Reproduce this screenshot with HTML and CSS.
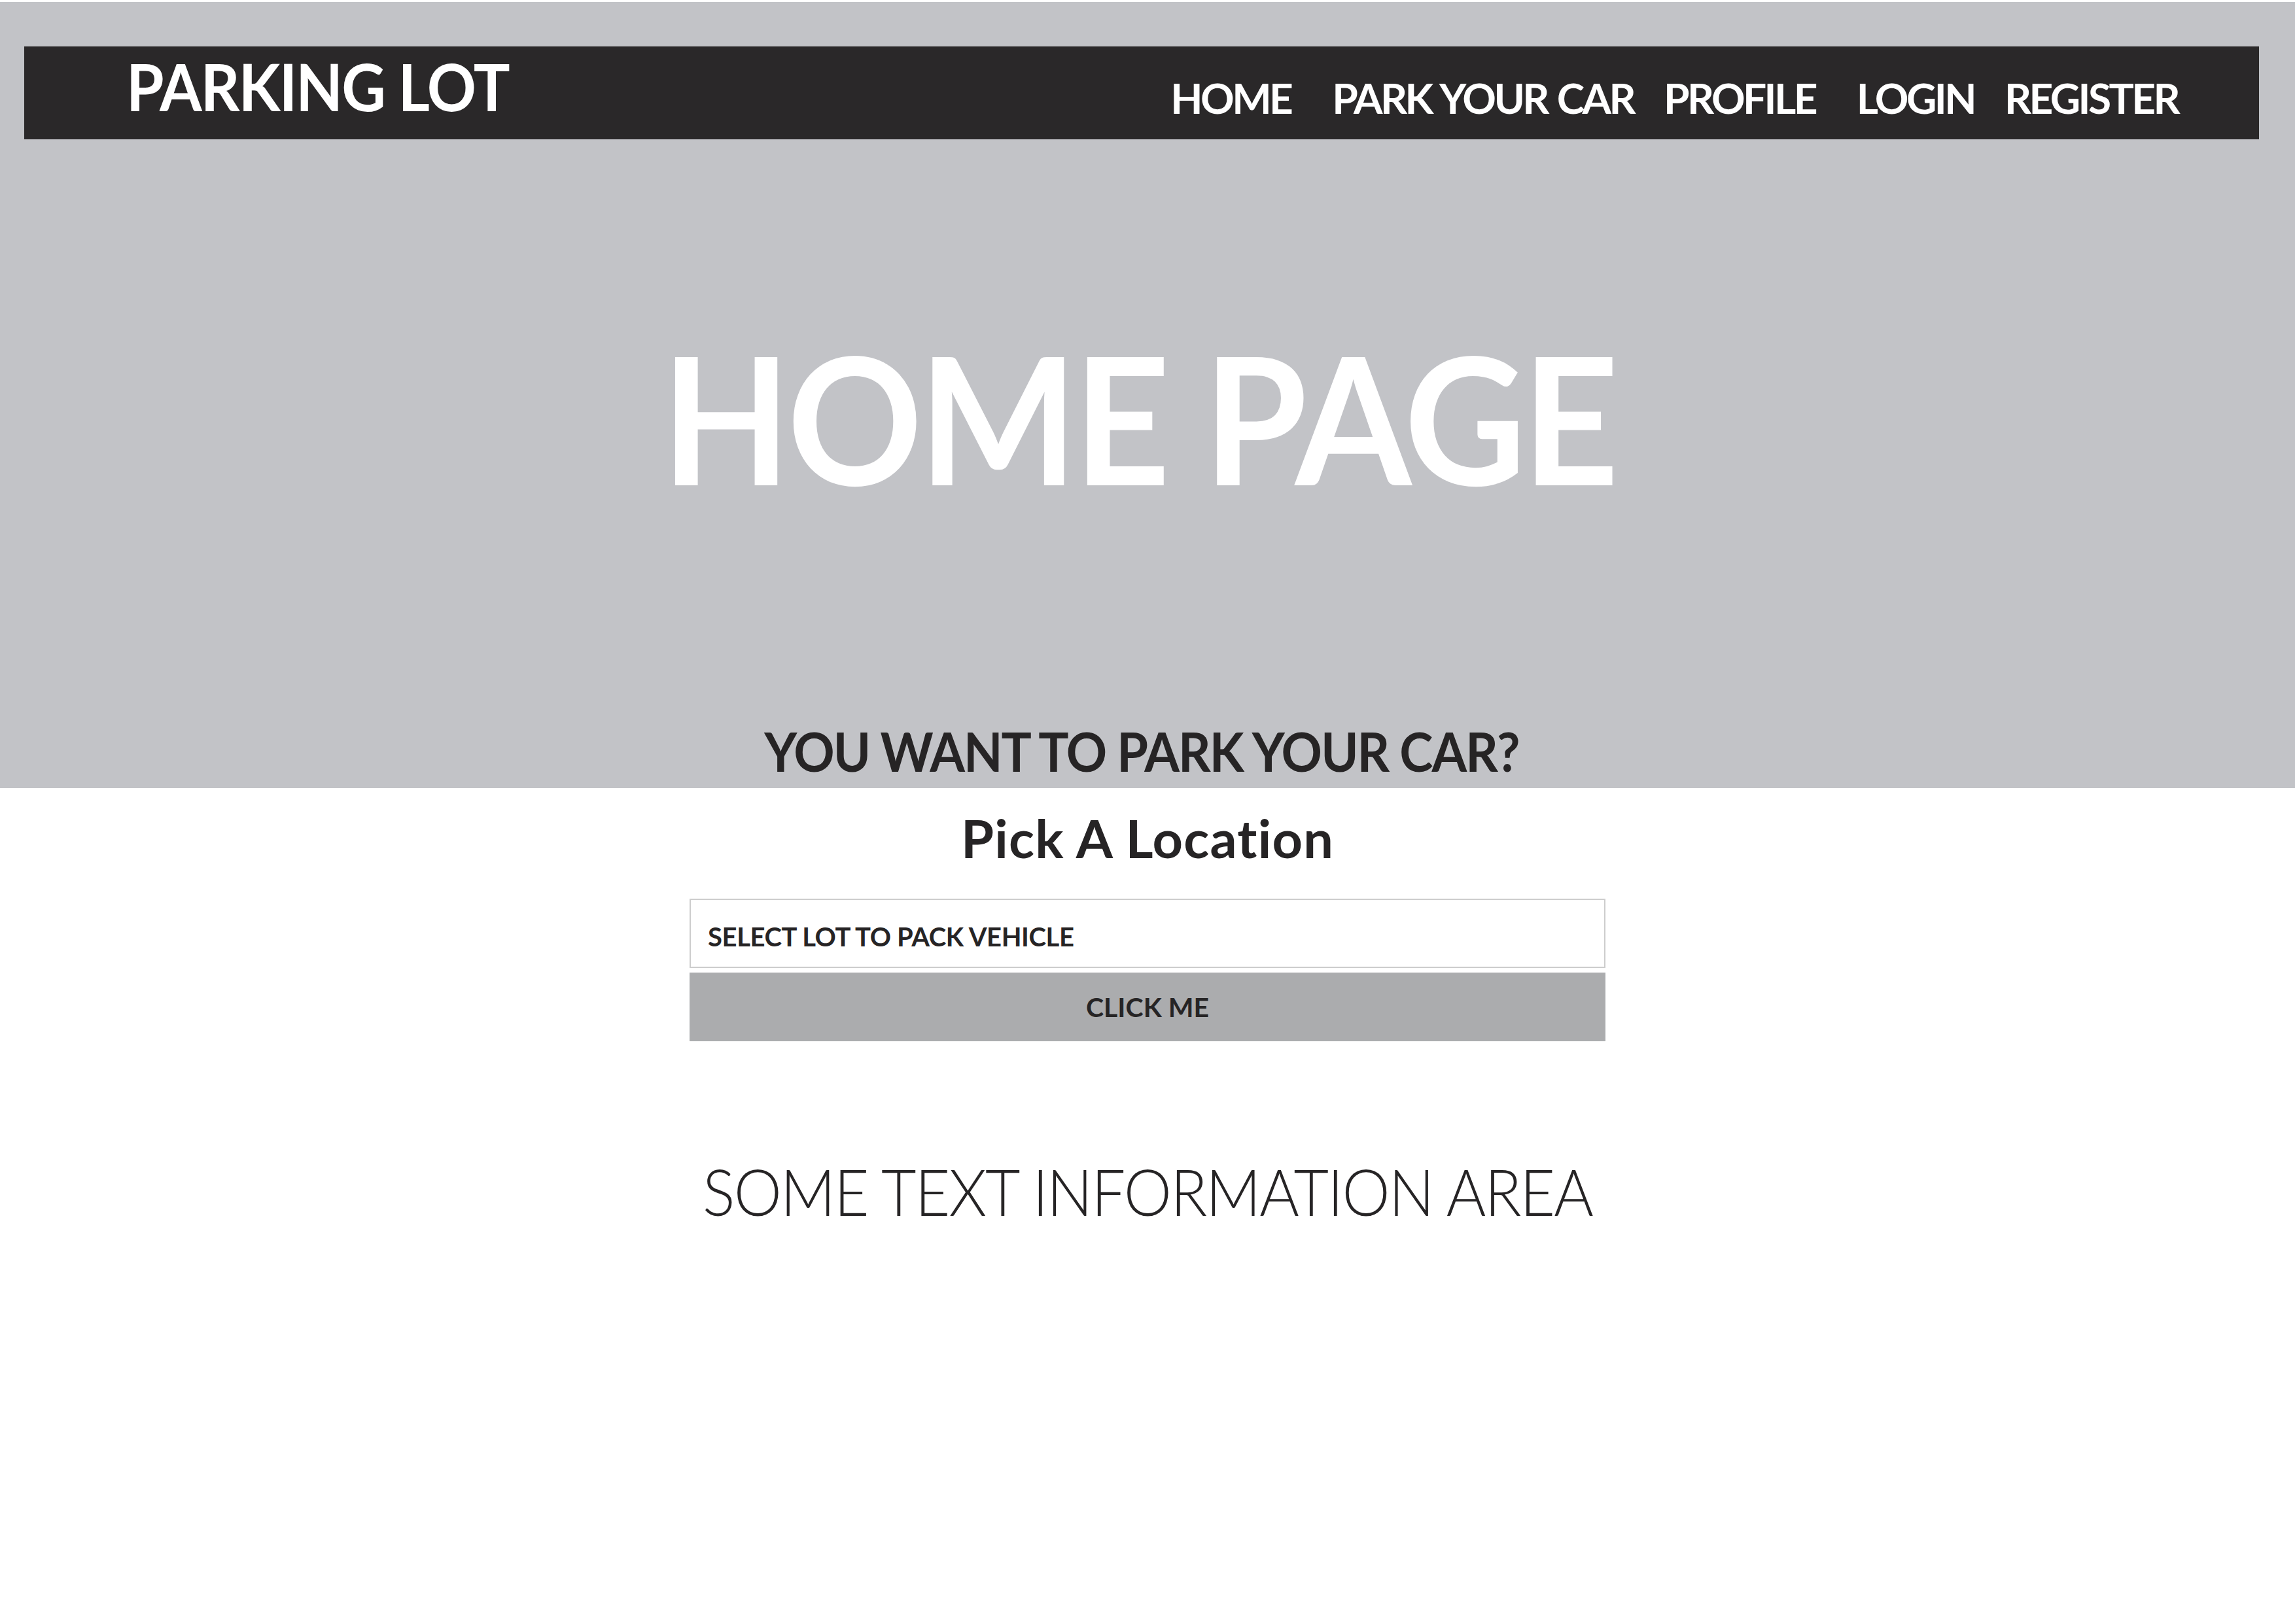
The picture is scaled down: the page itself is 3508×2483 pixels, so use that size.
FILE: index.html
```html
<!DOCTYPE html>
<html lang="en">
<head>
<meta charset="utf-8">
<title>Parking Lot - Home Page</title>
<link rel="stylesheet" href="styles.css">
</head>
<body>
<section class="hero">
  <header class="navbar">
    <div class="brand">PARKING LOT</div>
    <nav class="menu">
      <a class="menu-item wide" href="#">HOME</a>
      <a class="menu-item" href="#">PARK YOUR CAR</a>
      <a class="menu-item wide" href="#">PROFILE</a>
      <a class="menu-item" href="#">LOGIN</a>
      <a class="menu-item" href="#">REGISTER</a>
    </nav>
  </header>
  <h1 class="hero-title">HOME PAGE</h1>
  <h2 class="hero-question">YOU WANT TO PARK YOUR CAR?</h2>
</section>
<main class="content">
  <h3 class="pick-title">Pick A Location</h3>
  <div class="form">
    <div class="lot-select">SELECT LOT TO PACK VEHICLE</div>
    <button class="click-btn" type="button">CLICK ME</button>
  </div>
  <p class="info">SOME TEXT INFORMATION AREA</p>
</main>
</body>
</html>
```
FILE: styles.css
```css
html, body {
  margin: 0;
  padding: 0;
  background: #ffffff;
}
body {
  font-family: "Lato", "Open Sans", "DejaVu Sans", sans-serif;
  color: #262425;
}
.hero {
  margin-top: 3px;
  height: 1202px;
  box-sizing: border-box;
  background: #c2c3c7;
  padding: 68px 55px 0 37px;
  display: flex;
  flex-direction: column;
}
.navbar {
  height: 142px;
  background: #2a2829;
  display: flex;
  align-items: flex-start;
  justify-content: space-between;
  padding: 0 124px 0 156px;
}
.brand {
  margin-top: 11px;
  font-size: 99px;
  line-height: 1;
  font-weight: 700;
  letter-spacing: -2px;
  color: #ffffff;
  transform: scaleX(0.94);
  transform-origin: 0 50%;
}
.menu {
  margin-top: 47px;
  display: flex;
  gap: 46px;
}
.menu-item {
  font-size: 64px;
  line-height: 1;
  font-weight: 700;
  letter-spacing: -3.6px;
  word-spacing: 3px;
  color: #ffffff;
  text-decoration: none;
}
.menu-item.wide {
  margin-right: 17px;
}
.hero-title {
  margin: 289px 0 0 -10px;
  font-size: 271px;
  line-height: 1;
  font-weight: 700;
  letter-spacing: -6px;
  color: #ffffff;
  text-align: center;
  transform: scaleX(0.946);
}
.hero-question {
  margin: 334px 0 0;
  font-size: 82px;
  line-height: 1;
  font-weight: 700;
  letter-spacing: -2px;
  text-align: center;
  transform: scaleX(0.942);
}
.content {
  display: flex;
  flex-direction: column;
  align-items: center;
}
.pick-title {
  margin: 35px 0 0;
  font-size: 81px;
  line-height: 1;
  font-weight: 700;
  letter-spacing: 1.2px;
}
.form {
  margin-top: 53px;
  width: 1400px;
  display: flex;
  flex-direction: column;
  gap: 7px;
}
.lot-select {
  height: 106px;
  box-sizing: border-box;
  border: 2px solid #cdcdcd;
  padding: 10px 0 0 26px;
  display: flex;
  align-items: center;
  font-size: 40px;
  line-height: 1;
  font-weight: 700;
  letter-spacing: -0.4px;
}
.click-btn {
  height: 105px;
  border: 0;
  margin: 0;
  background: #abacae;
  font-family: inherit;
  font-size: 41px;
  line-height: 1;
  font-weight: 700;
  color: #262425;
}
.info {
  margin: 180px 0 0;
  font-size: 98px;
  line-height: 1;
  font-weight: 300;
  letter-spacing: -2px;
  transform: scaleX(0.943);
}
```
